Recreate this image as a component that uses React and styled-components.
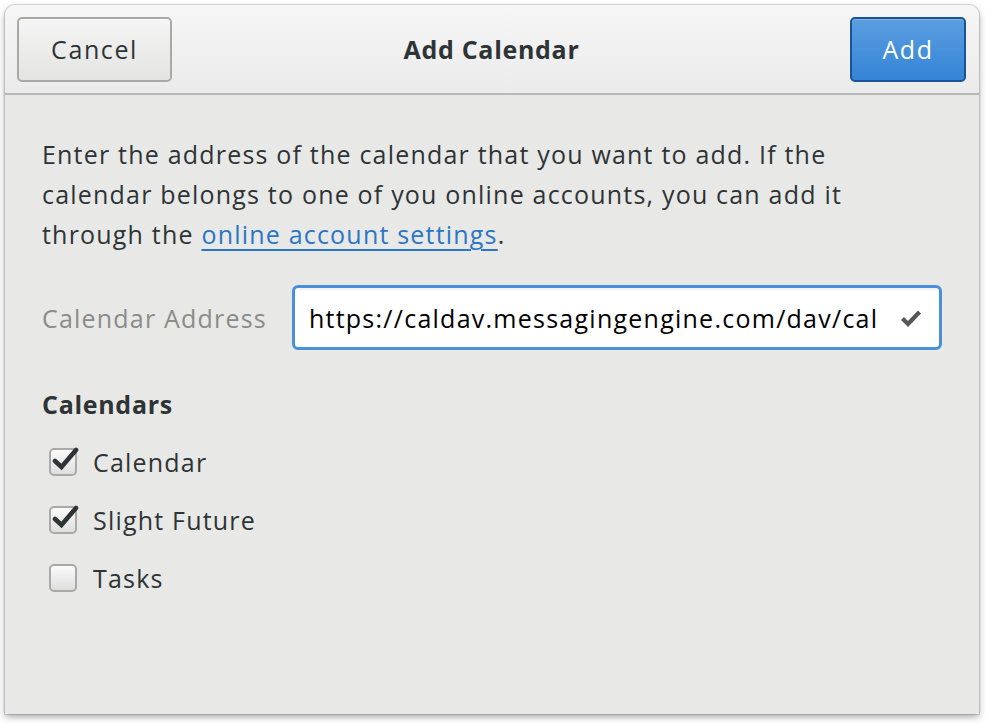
import styled, { createGlobalStyle } from "styled-components";

const GlobalStyle = createGlobalStyle`
  html, body {
    margin: 0;
    background: #ffffff;
  }
  body {
    font-family: "Open Sans", "Noto Sans", "DejaVu Sans", sans-serif;
    color: #2e3436;
  }
`;

const Page = styled.div`
  padding: 5px 9px 9px 5px;
`;

const Window = styled.div`
  width: 974px;
  height: 709px;
  display: flex;
  flex-direction: column;
  background: #e8e8e7;
  border-radius: 10px 10px 0 0;
  box-shadow: 0 0 0 1px rgba(0, 0, 0, 0.12), 0 3px 7px rgba(0, 0, 0, 0.35);
  overflow: hidden;
`;

const HeaderBar = styled.header`
  height: 88px;
  flex-shrink: 0;
  display: grid;
  grid-template-columns: 1fr auto 1fr;
  align-items: center;
  padding: 0 13px 0 12px;
  background: linear-gradient(to bottom, #f6f6f6, #ebebeb);
  border-bottom: 2px solid #b8b8b6;
`;

const Title = styled.h1`
  margin: 0;
  font-size: 25px;
  font-weight: 700;
  color: #2e3436;
  letter-spacing: 0.7px;
`;

const HeaderButton = styled.button`
  justify-self: ${(p) => (p.$end ? "end" : "start")};
  width: ${(p) => p.$width}px;
  height: 65px;
  padding: 0;
  border-radius: 5px;
  font-family: inherit;
  font-size: 25px;
  letter-spacing: 1.6px;
  cursor: pointer;
  color: ${(p) => (p.$primary ? "#ffffff" : "#2e3436")};
  border: 2px solid ${(p) => (p.$primary ? "#1b5394" : "#a8a8a6")};
  background: ${(p) =>
    p.$primary
      ? "linear-gradient(to bottom, #5a9ee0, #3584d6)"
      : "linear-gradient(to bottom, #f4f4f4, #e4e4e3)"};
  box-shadow: inset 0 1px rgba(255, 255, 255, ${(p) => (p.$primary ? 0.25 : 0.9)});
`;

const Content = styled.main`
  padding: 39px 37px 0 37px;
  display: flex;
  flex-direction: column;
`;

const Intro = styled.p`
  margin: 0;
  font-size: 25px;
  line-height: 40px;
  color: #2e3436;
  letter-spacing: 1.2px;
`;

const Link = styled.a`
  color: #2a76c6;
  text-decoration: underline;
  text-underline-offset: 5px;
  text-decoration-thickness: 2px;
`;

const AddressRow = styled.div`
  display: flex;
  align-items: center;
  gap: 25px;
  margin-top: 31px;
`;

const FieldLabel = styled.label`
  font-size: 25px;
  color: #8a8c88;
  letter-spacing: 1.2px;
  white-space: nowrap;
`;

const Entry = styled.div`
  flex: 1;
  height: 59px;
  display: flex;
  align-items: center;
  padding: 0 17px 0 14px;
  background: #ffffff;
  border: 3px solid #4a90d9;
  border-radius: 6px;
  box-shadow: inset 0 2px 2px rgba(0, 0, 0, 0.06);
`;

const EntryText = styled.span`
  flex: 1;
  font-size: 25px;
  color: #000000;
  letter-spacing: 1.25px;
  white-space: nowrap;
  overflow: hidden;
`;

const SectionTitle = styled.h2`
  margin: 37px 0 0 0;
  font-size: 25px;
  line-height: 34px;
  font-weight: 700;
  color: #2e3436;
  letter-spacing: 0.7px;
`;

const CheckList = styled.div`
  display: flex;
  flex-direction: column;
  gap: 24px;
  margin-top: 24px;
  padding-left: 7px;
`;

const CheckRow = styled.label`
  display: flex;
  align-items: center;
  gap: 16px;
  height: 34px;
  font-size: 25px;
  color: #2e3436;
  letter-spacing: 1.2px;
`;

const Box = styled.span`
  position: relative;
  width: 28px;
  height: 28px;
  box-sizing: border-box;
  border: 2px solid #a9a9a7;
  border-radius: 5px;
  background: linear-gradient(to bottom, #fbfbfb, #dedede);
  flex-shrink: 0;
`;

const Tick = styled.svg`
  position: absolute;
  left: 1px;
  top: -4px;
`;

function Checkbox({ checked }) {
  return (
    <Box>
      {checked && (
        <Tick width="28" height="28" viewBox="0 0 28 28">
          <path d="M3 15 L9.5 21 L24 4" fill="none" stroke="#2e3436" strokeWidth="4.6" strokeLinecap="round" strokeLinejoin="miter" />
        </Tick>
      )}
    </Box>
  );
}

const calendars = [
  { name: "Calendar", checked: true },
  { name: "Slight Future", checked: true },
  { name: "Tasks", checked: false },
];

export default function App() {
  return (
    <>
      <GlobalStyle />
      <Page>
        <Window>
          <HeaderBar>
            <HeaderButton $width={155}>Cancel</HeaderButton>
            <Title>Add Calendar</Title>
            <HeaderButton $width={116} $primary $end>Add</HeaderButton>
          </HeaderBar>
          <Content>
            <Intro>
              Enter the address of the calendar that you want to add. If the calendar belongs to one of you online
              accounts, you can add it through the <Link href="#">online account settings</Link>.
            </Intro>
            <AddressRow>
              <FieldLabel>Calendar Address</FieldLabel>
              <Entry>
                <EntryText>https://caldav.messagingengine.com/dav/cal</EntryText>
                <svg width="22" height="18" viewBox="0 0 22 18">
                  <path d="M2.5 9.5 L8 15 L19.5 3" fill="none" stroke="#555753" strokeWidth="4.2" />
                </svg>
              </Entry>
            </AddressRow>
            <SectionTitle>Calendars</SectionTitle>
            <CheckList>
              {calendars.map((c) => (
                <CheckRow key={c.name}>
                  <Checkbox checked={c.checked} />
                  {c.name}
                </CheckRow>
              ))}
            </CheckList>
          </Content>
        </Window>
      </Page>
    </>
  );
}
